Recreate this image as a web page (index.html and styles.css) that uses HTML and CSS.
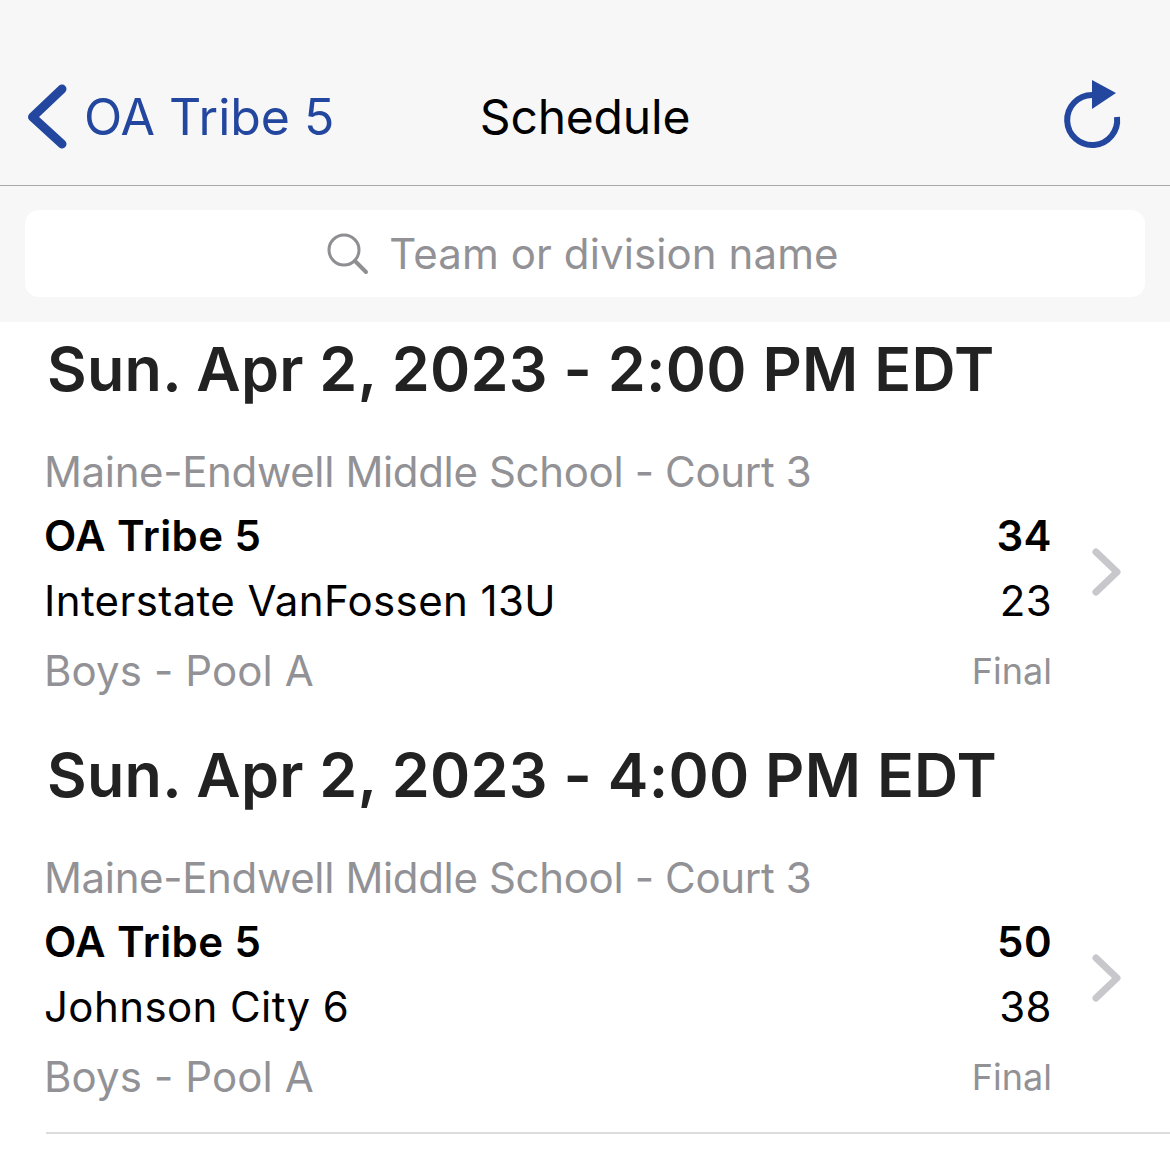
FILE: index.html
```html
<!DOCTYPE html>
<html lang="en">
<head>
    <meta charset="UTF-8">
    <title>Schedule</title>
    <link rel="stylesheet" href="styles.css">
</head>
<body>
    <div class="navbar">
        <a class="back">
            <svg class="back-icon" width="42" height="68" viewBox="0 0 42 68"><path d="M35 7 L5.500 35 L35 62" fill="none" stroke="#23479f" stroke-width="9" stroke-linecap="round" stroke-linejoin="round"/></svg>
            <span class="back-label">OA Tribe 5</span>
        </a>
        <div class="title">Schedule</div>
        <svg class="refresh" width="60" height="70" viewBox="0 0 60 70"><path d="M55 37 A25 25 0 1 1 30 15" fill="none" stroke="#23479f" stroke-width="6"/><path d="M30 0 L54 13 L30 29 Z" fill="#23479f"/></svg>
    </div>

    <div class="search-wrap">
        <div class="search">
            <svg width="42" height="42" viewBox="0 0 42 42"><circle cx="17" cy="17" r="15" fill="none" stroke="#8e8e93" stroke-width="3"/><path d="M28 28 L39 39" stroke="#8e8e93" stroke-width="4" stroke-linecap="round"/></svg>
            <span>Team or division name</span>
        </div>
    </div>

    <div class="game">
        <h2>Sun. Apr 2, 2023 - 2:00 PM EDT</h2>
        <div class="game-row">
            <div class="game-info">
                <div class="venue">Maine-Endwell Middle School - Court 3</div>
                <div class="team winner"><span>OA Tribe 5</span><span>34</span></div>
                <div class="team"><span>Interstate VanFossen 13U</span><span>23</span></div>
                <div class="meta"><span>Boys - Pool A</span><span class="status">Final</span></div>
            </div>
            <svg class="chevron" width="30" height="48" viewBox="0 0 30 48"><path d="M4 4 L25 24 L4 44" fill="none" stroke="#c7c7cc" stroke-width="7" stroke-linecap="round" stroke-linejoin="round"/></svg>
        </div>
    </div>

    <div class="game">
        <h2>Sun. Apr 2, 2023 - 4:00 PM EDT</h2>
        <div class="game-row">
            <div class="game-info">
                <div class="venue">Maine-Endwell Middle School - Court 3</div>
                <div class="team winner"><span>OA Tribe 5</span><span>50</span></div>
                <div class="team"><span>Johnson City 6</span><span>38</span></div>
                <div class="meta"><span>Boys - Pool A</span><span class="status">Final</span></div>
            </div>
            <svg class="chevron" width="30" height="48" viewBox="0 0 30 48"><path d="M4 4 L25 24 L4 44" fill="none" stroke="#c7c7cc" stroke-width="7" stroke-linecap="round" stroke-linejoin="round"/></svg>
        </div>
    </div>

    <div class="divider"></div>
</body>
</html>
```

FILE: styles.css
```css
body { margin: 0; background: #fff; color: #000; font-family: Inter, "Liberation Sans", sans-serif; overflow: hidden; }

.navbar {
    height: 186px;
    box-sizing: border-box;
    padding: 80px 48px 0 27px;
    display: flex;
    align-items: flex-start;
    justify-content: space-between;
    background: #f7f7f7;
    border-bottom: 1px solid #a9a9ab;
    position: relative;
}
.back { display: flex; align-items: center; color: #23479f; font-size: 50px; height: 72px; }
.back-icon { margin-right: 15px; }
.back-label { margin-top: 2px; }
.title { position: absolute; left: 0; right: 0; top: 89px; text-align: center; font-size: 48px; line-height: 56px; letter-spacing: -0.2px; }

.search-wrap { background: #f7f7f7; padding: 24px 25px 25px; }
.search {
    height: 87px;
    box-sizing: border-box;
    padding-right: 4px;
    border-radius: 14px;
    background: #fff;
    display: flex;
    align-items: center;
    justify-content: center;
    gap: 20px;
    color: #929296;
    font-size: 42px;
    letter-spacing: 0.1px;
}

.game { padding: 0 0 0 44px; height: 406px; box-sizing: border-box; }
.game h2 { margin: 0; padding-left: 3px; height: 104px; font-size: 61px; line-height: 94px; font-weight: 600; color: #222; letter-spacing: 0.27px; white-space: nowrap; }
.game-row { display: flex; align-items: center; }
.game-info { width: 1008px; }
.venue { font-size: 42px; line-height: 64px; height: 82px; color: #929296; letter-spacing: -0.35px; padding-top: 14px; box-sizing: border-box; }
.team { display: flex; justify-content: space-between; font-size: 42px; line-height: 56px; height: 65px; letter-spacing: 0.4px; }
.winner { font-weight: 600; }
.meta { display: flex; justify-content: space-between; align-items: center; font-size: 42px; line-height: 60px; height: 66px; color: #929296; letter-spacing: 0.1px; }
.status { font-size: 36px; letter-spacing: 0; }
.chevron { margin-left: 40px; margin-top: 14px; }

.divider { height: 2px; background: #dcdcde; margin: -2px 0 0 46px; }
```
